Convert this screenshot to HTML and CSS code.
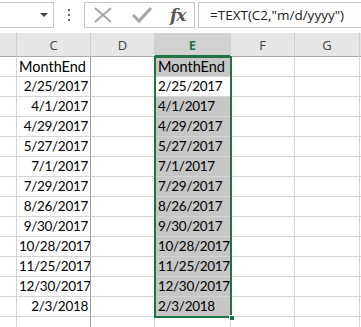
FILE: index.html
```html
<!DOCTYPE html>
<html lang="en">
<head>
  <meta charset="UTF-8">
  <title>MonthEnd</title>
  <link rel="stylesheet" href="styles.css">
</head>
<body>
  <div class="toolbar">
    <div class="name-box"><span class="arrow"></span></div>
    <div class="grip"><i></i><i></i><i></i></div>
    <div class="fx-buttons">
      <svg width="22" height="16" viewBox="0 0 22 16"><path d="M3 1 L19 15 M19 1 L3 15" stroke="#a6a6a6" stroke-width="2" fill="none"/></svg>
      <svg width="20" height="16" viewBox="0 0 20 16"><path d="M1 8 L7 14 L19 1" stroke="#a6a6a6" stroke-width="3" fill="none"/></svg>
      <span class="fx">fx</span>
    </div>
    <div class="formula">=TEXT(C2,"m/d/yyyy")</div>
  </div>

  <div class="sheet">
    <div class="hd"></div>
    <div class="hd">C</div>
    <div class="hd">D</div>
    <div class="hd active">E</div>
    <div class="hd">F</div>
    <div class="hd">G</div>
    <div class="hd last"></div>
  </div>

  <div class="sheet body" id="rows">
    <div class="selection"><span class="handle"></span></div>
  </div>

  <script>
    const dates = ['2/25/2017', '4/1/2017', '4/29/2017', '5/27/2017', '7/1/2017', '7/29/2017',
      '8/26/2017', '9/30/2017', '10/28/2017', '11/25/2017', '12/30/2017', '2/3/2018'];
    const rows = document.getElementById('rows');

    function addRow(c, e, cls) {
      const isText = c === 'MonthEnd';
      const cells = [
        ['cell', ''],
        ['cell c' + (isText ? ' txt' : ' num'), c],
        ['cell d', ''],
        ['cell e ' + cls + (isText ? '' : ' num'), e],
        ['cell', ''],
        ['cell', ''],
        ['cell last', '']
      ];
      cells.forEach(([k, t]) => {
        const div = document.createElement('div');
        div.className = k;
        div.textContent = t;
        rows.appendChild(div);
      });
    }

    addRow('MonthEnd', 'MonthEnd', 'sel');
    dates.forEach((d, i) => addRow(d, d, i === 0 ? 'cur' : 'sel'));
    addRow('', '', 'none');
  </script>
</body>
</html>
```

FILE: styles.css
```css
* {
  box-sizing: border-box;
  margin: 0;
  padding: 0;
}

body {
  width: 361px;
  height: 327px;
  overflow: hidden;
  background: #fff;
  font-family: 'Lato', sans-serif;
}

.toolbar {
  display: flex;
  align-items: center;
  height: 33px;
  padding-bottom: 4px;
  background: #fff;
}

.name-box {
  position: relative;
  width: 55px;
  height: 26px;
  margin-left: -1px;
  border: 1px solid #c6c6c6;
  background: #fff;
}

.arrow {
  position: absolute;
  left: 40px;
  top: 10px;
  border-left: 4px solid transparent;
  border-right: 4px solid transparent;
  border-top: 4px solid #444;
}

.grip {
  display: flex;
  flex-direction: column;
  gap: 3px;
  width: 30px;
  align-items: center;
}

.grip i {
  width: 2px;
  height: 2px;
  background: #666;
}

.fx-buttons {
  display: flex;
  align-items: center;
  gap: 18px;
  width: 111px;
  height: 26px;
  padding-left: 7px;
  border: 1px solid #c6c6c6;
  background: #fff;
}

.fx {
  font-family: 'DejaVu Serif', 'Liberation Serif', serif;
  font-style: italic;
  font-weight: bold;
  font-size: 17px;
  color: #555;
  letter-spacing: -1px;
}

.formula {
  flex: 1;
  height: 26px;
  margin-left: 3px;
  padding-left: 11px;
  border: 1px solid #c6c6c6;
  border-right: none;
  font-family: 'Open Sans', sans-serif;
  font-size: 13.5px;
  line-height: 24px;
  color: #222;
}

.sheet {
  display: grid;
  grid-template-columns: 17px 74px 64px 76px 64px 65px 1fr;
}

.hd {
  height: 24px;
  padding-top: 2px;
  background: #e6e6e6;
  border-right: 1px solid #cfcfcf;
  border-bottom: 1px solid #ababab;
  font-family: 'Open Sans', sans-serif;
  font-size: 13px;
  text-align: center;
  line-height: 20px;
  color: #444;
}

.hd.active {
  background: #d2d2d2;
  color: #217346;
  font-weight: bold;
  border-bottom: 2px solid #217346;
}

.hd.last {
  border-right: none;
}

.body {
  position: relative;
  grid-auto-rows: 20px;
}

.cell {
  border-right: 1px solid #d4d4d4;
  border-bottom: 1px solid #d4d4d4;
  font-size: 14.5px;
  line-height: 19px;
  color: #000;
  padding: 0 2px;
  white-space: nowrap;
  overflow: hidden;
}

.cell.num {
  font-size: 13.5px;
  letter-spacing: -0.3px;
}

.cell.c {
  text-align: right;
  border-right-color: #9e9e9e;
}

.cell.c.txt {
  text-align: left;
}

.cell.e {
  padding-left: 3px;
}

.cell.sel {
  background: #c6c6c6;
}

.cell.last {
  border-right: none;
}

.selection {
  position: absolute;
  left: 154px;
  top: -1px;
  width: 78px;
  height: 262px;
  border: 2px solid #217346;
  pointer-events: none;
}

.handle {
  position: absolute;
  right: -5px;
  bottom: -5px;
  width: 6px;
  height: 6px;
  background: #217346;
  border: 1px solid #fff;
}
```
